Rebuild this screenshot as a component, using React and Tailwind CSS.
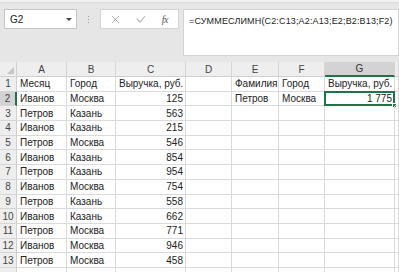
import React from "react";

const cols = [
  { key: "A", w: "w-[50px]" },
  { key: "B", w: "w-[49px]" },
  { key: "C", w: "w-[70px]" },
  { key: "D", w: "w-[46px]" },
  { key: "E", w: "w-[47px]" },
  { key: "F", w: "w-[46px]" },
  { key: "G", w: "w-[70px]" },
  { key: "H", w: "w-[4px]" },
];

const rows = [
  ["Месяц", "Город", "Выручка, руб.", "", "Фамилия", "Город", "Выручка, руб."],
  ["Иванов", "Москва", "125", "", "Петров", "Москва", "1 775"],
  ["Петров", "Казань", "563"],
  ["Иванов", "Казань", "215"],
  ["Петров", "Москва", "546"],
  ["Иванов", "Казань", "854"],
  ["Петров", "Казань", "954"],
  ["Иванов", "Москва", "754"],
  ["Петров", "Казань", "558"],
  ["Иванов", "Казань", "662"],
  ["Петров", "Москва", "771"],
  ["Иванов", "Москва", "946"],
  ["Петров", "Москва", "458"],
  [],
];

const isNum = (v) => /^[\d ]+$/.test(v);

function Toolbar() {
  return (
    <div className="h-[62px] bg-[#e6e6e6]">
      <div className="h-[3px] bg-[#f1f1f1] border-b border-[#dcdcdc]" />
      <div className="flex items-start pt-[6px] pl-[4px]">
        {/* name box */}
        <div className="w-[73px] h-[20px] bg-white border border-[#c6c6c6] flex items-center justify-between pl-[5px] pr-[4px] text-[10px] text-[#222]">
          <span>G2</span>
          <span className="w-0 h-0 border-l-[3px] border-r-[3px] border-t-[3px] border-l-transparent border-r-transparent border-t-[#444]" />
        </div>
        {/* dots */}
        <div className="w-[23px] h-[20px] flex flex-col items-center justify-center gap-[2px]">
          <span className="w-[1px] h-[1px] bg-[#9a9a9a]" />
          <span className="w-[1px] h-[1px] bg-[#9a9a9a]" />
          <span className="w-[1px] h-[1px] bg-[#9a9a9a]" />
        </div>
        {/* cancel / enter / fx */}
        <div className="w-[79px] h-[20px] bg-white border border-[#d4d4d4] flex items-center justify-around px-[2px]">
          <svg width="9" height="9" viewBox="0 0 9 9">
            <path d="M1 1L8 8M8 1L1 8" stroke="#b4b4b4" strokeWidth="1" />
          </svg>
          <svg width="10" height="8" viewBox="0 0 10 8">
            <path d="M1 4L4 7L9 1" stroke="#b4b4b4" strokeWidth="1.1" fill="none" />
          </svg>
          <span className="text-[10px] italic text-[#555] font-['Liberation_Serif',serif] tracking-[-0.5px]">fx</span>
        </div>
        {/* formula bar */}
        <div className="ml-[4px] flex-1 h-[47px] bg-white border border-[#d4d4d4] pl-[5px] pt-[5px] text-[9px] tracking-[0.15px] text-[#222] whitespace-nowrap overflow-hidden">
          =СУММЕСЛИМН(C2:C13;A2:A13;E2;B2:B13;F2)
        </div>
      </div>
    </div>
  );
}

export default function App() {
  return (
    <div className="w-[399px] h-[272px] overflow-hidden bg-white font-['Liberation_Sans',Arial,sans-serif]">
      <Toolbar />
      {/* column headers */}
      <div className="flex h-[15px] bg-[#eeeeee] text-[10px] text-[#444]">
        <div className="w-[17px] h-full border-r border-b border-[#cfcfcf] relative">
          <svg className="absolute right-[2px] bottom-[2px]" width="7" height="7" viewBox="0 0 7 7">
            <path d="M7 0L7 7L0 7Z" fill="#c4c4c4" />
          </svg>
        </div>
        {cols.map((c) => (
          <div
            key={c.key}
            className={`${c.w} h-full flex items-center justify-center border-r border-[#d6d6d6] ${
              c.key === "G" ? "bg-[#d3d3d3] border-b-2 border-b-[#217346] text-[#333]" : "border-b border-b-[#cfcfcf]"
            }`}
          >
            {c.key !== "H" && c.key}
          </div>
        ))}
      </div>
      {/* rows */}
      {rows.map((r, i) => (
        <div key={i} className="flex h-[14.7px] text-[10px] text-[#222]">
          <div
            className={`w-[17px] h-full flex items-center justify-center text-[#444] border-b border-[#d6d6d6] ${
              i === 1 ? "bg-[#d3d3d3] border-r-2 border-r-[#217346]" : "bg-[#eeeeee] border-r border-r-[#cfcfcf]"
            }`}
          >
            {r.length > 0 && i + 1}
          </div>
          {cols.map((c, j) => {
            const v = r[j] || "";
            const sel = i === 1 && c.key === "G";
            return (
              <div
                key={c.key}
                className={`${c.w} h-full relative flex items-center border-r border-b border-[#dadada] whitespace-nowrap ${
                  isNum(v) && v ? "justify-end pr-[2px]" : "pl-[3px]"
                }`}
              >
                {v}
                {sel && (
                  <>
                    <span className="absolute -left-[1px] -top-[1px] -right-[1px] -bottom-[1px] border-2 border-[#217346]" />
                    <span className="absolute -right-[3px] -bottom-[3px] w-[5px] h-[5px] bg-[#217346] border border-white" />
                  </>
                )}
              </div>
            );
          })}
        </div>
      ))}
    </div>
  );
}
